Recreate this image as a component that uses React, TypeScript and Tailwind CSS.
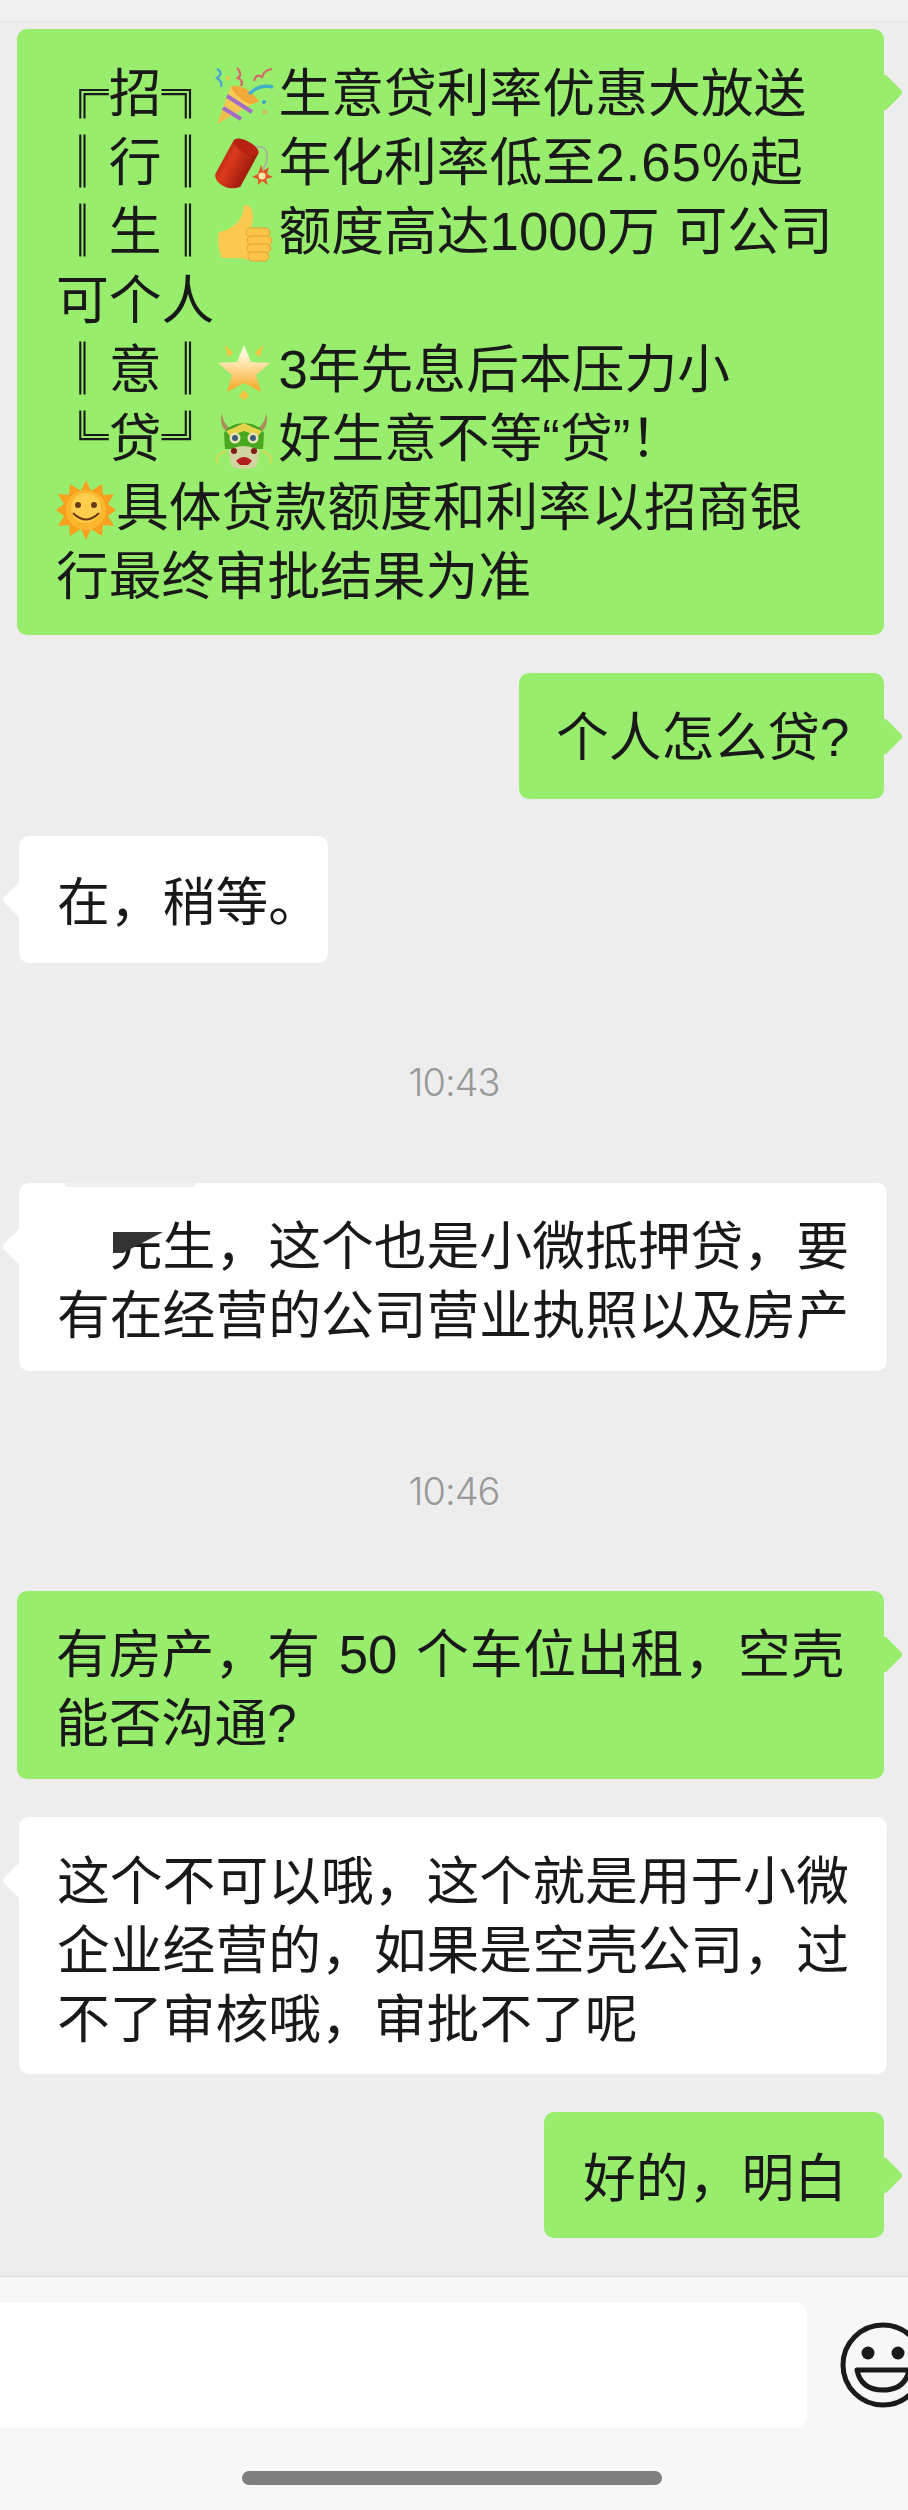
const green = 'bg-[#98ed6c]'

const lineCls = 'block h-[69px] leading-[69px] whitespace-nowrap'
const emojiCls = 'inline-block w-[60px] h-[60px] align-[-14px] mr-[4px]'
const boxCls = "font-['Noto_Sans_CJK_SC'] leading-none"

function Tail({ side }: { side: 'left' | 'right' }) {
  return (
    <span
      className={`absolute top-[49.5px] w-[27px] h-[27px] rotate-45 rounded-[4px] ${side === 'right' ? `-right-[13.5px] ${green}` : '-left-[12px] bg-white'}`}
    />
  )
}

function Popper() {
  return (
    <svg viewBox="0 0 60 60" className={emojiCls}>
      <defs>
        <linearGradient id="cone" x1="0" y1="1" x2="1" y2="0">
          <stop offset="0" stopColor="#e9b949" />
          <stop offset="1" stopColor="#ffd85e" />
        </linearGradient>
      </defs>
      <path d="M3 58 L17 20 Q30 22 42 36 Z" fill="url(#cone)" />
      <path d="M9 42 L27 53 M13 30 L38 46" stroke="#a56cc8" strokeWidth="4" fill="none" />
      <path d="M17 20 Q32 18 45 35 Q36 42 26 32 Q18 26 17 20 Z" fill="#f2a93a" />
      <path d="M35 28 Q45 18 59 21" stroke="#41b0c9" strokeWidth="3.5" fill="none" />
      <path d="M3 3 Q10 7 3 12 Q9 16 7 21" stroke="#4aa3d8" strokeWidth="2.2" fill="none" />
      <path d="M23 2 Q29 8 24 12 Q30 15 27 20" stroke="#d9686a" strokeWidth="2.4" fill="none" />
      <path d="M40 15 Q42 7 48 11 Q50 4 58 3" stroke="#d9686a" strokeWidth="2.2" fill="none" />
      <circle cx="14" cy="12" r="2" fill="#f0c43c" />
      <circle cx="50" cy="36" r="2" fill="#3a9fc4" />
      <circle cx="51" cy="46" r="2.5" fill="#cdbb66" />
    </svg>
  )
}

function Firecracker() {
  return (
    <svg viewBox="0 0 60 60" className={emojiCls}>
      <defs>
        <linearGradient id="red" x1="0" y1="0" x2="1" y2="0.6">
          <stop offset="0" stopColor="#8e1408" />
          <stop offset="0.45" stopColor="#dc3a1c" />
          <stop offset="1" stopColor="#8a1206" />
        </linearGradient>
      </defs>
      <path d="M19.7 5.3 L44.3 18.7 L26.3 51.7 Q14 56 5 48 Q0 43 1.7 38.3 Z" fill="url(#red)" />
      <ellipse cx="32" cy="12" rx="14" ry="6" transform="rotate(28 32 12)" fill="#b72213" />
      <path d="M42 12 Q52 10 53 20 Q54 30 46 37" stroke="#a9b59a" strokeWidth="2" fill="none" />
      <path d="M47 30 L49 36 L55 32 L53 39 L59 42 L52 44 L54 50 L48 46 L44 50 L44 44 L38 42 L44 39 Z" fill="#e2562b" />
      <circle cx="48" cy="41" r="3.5" fill="#ffe9a8" />
    </svg>
  )
}

function Thumb() {
  return (
    <svg viewBox="0 0 60 60" className={emojiCls}>
      <path d="M5 28 Q16 26 24 18 Q30 10 29 3 Q34 -2 38 6 Q41 16 36 26 L36 56 Q28 54 22 54 L8 54 Q2 42 5 28 Z" fill="#fbc94f" />
      <rect x="32" y="24" width="24" height="9" rx="4.5" fill="#fcc54a" stroke="#e7a031" strokeWidth="1" />
      <rect x="33" y="32" width="25" height="9" rx="4.5" fill="#fcc54a" stroke="#e7a031" strokeWidth="1" />
      <rect x="33" y="40" width="24" height="9" rx="4.5" fill="#fcc54a" stroke="#e7a031" strokeWidth="1" />
      <rect x="34" y="48" width="21" height="9" rx="4.5" fill="#fcc54a" stroke="#e7a031" strokeWidth="1" />
    </svg>
  )
}

function Star() {
  return (
    <svg viewBox="0 0 60 60" className={emojiCls}>
      <defs>
        <linearGradient id="star" x1="0" y1="0" x2="0" y2="1">
          <stop offset="0.2" stopColor="#fff8d8" />
          <stop offset="1" stopColor="#f9a51f" />
        </linearGradient>
      </defs>
      <path d="M30 3 L37 20 L56 21 L42 33 L47 50 L30 41 L13 50 L18 33 L4 21 L23 20 Z" fill="url(#star)" />
      <path d="M11 3 L19 11 L14 15 Z M49 3 L41 11 L46 15 Z M30 48 L35 54 L30 58 L25 54 Z" fill="#f8c23c" />
    </svg>
  )
}

function Dragon() {
  return (
    <svg viewBox="0 0 60 60" className={emojiCls}>
      <path d="M8 2 Q9 14 18 18 L14 22 Q4 14 8 2 Z M52 2 Q51 14 42 18 L46 22 Q56 14 52 2 Z" fill="#a88f5c" />
      <path d="M10 22 Q16 12 30 12 Q44 12 50 22 L49 38 L11 38 Z" fill="#47a81f" />
      <path d="M12 20 L22 16 L30 12 L38 16 L48 20 L44 25 L30 20 L16 25 Z" fill="#e4d34a" />
      <circle cx="21" cy="27" r="5.5" fill="#e9e5b8" />
      <circle cx="39" cy="27" r="5.5" fill="#e9e5b8" />
      <circle cx="21" cy="27" r="3" fill="#3f5b78" />
      <circle cx="39" cy="27" r="3" fill="#3f5b78" />
      <path d="M14 40 Q30 30 46 40 L42 56 Q30 60 18 56 Z" fill="#cfd4a0" />
      <circle cx="20" cy="40" r="3" fill="#7a1d17" />
      <circle cx="40" cy="40" r="3" fill="#7a1d17" />
      <path d="M22 50 Q30 42 38 50 L34 54 H26 Z" fill="#b21f1c" />
      <path d="M12 40 Q0 44 4 52 M48 40 Q60 44 56 52" stroke="#e4d34a" strokeWidth="1.5" fill="none" />
    </svg>
  )
}

function Sun() {
  return (
    <svg viewBox="0 0 60 60" className="inline-block w-[60px] h-[60px] align-[-14px]">
      <path d="M30 0 L35 11 L46 4 L47 15 L58 14 L52 24 L60 30 L52 36 L58 46 L47 45 L46 56 L35 49 L30 60 L25 49 L14 56 L13 45 L2 46 L8 36 L0 30 L8 24 L2 14 L13 15 L14 4 L25 11 Z" fill="#f9a01e" />
      <circle cx="30" cy="30" r="20" fill="#fcb62e" />
      <circle cx="30" cy="28" r="15" fill="#ffce4d" />
      <circle cx="22" cy="25" r="3" fill="#6b3a12" />
      <circle cx="38" cy="25" r="3" fill="#6b3a12" />
      <path d="M17 33 Q30 46 43 33" stroke="#6b3a12" strokeWidth="2" fill="none" />
    </svg>
  )
}

function Smiley() {
  return (
    <svg viewBox="0 0 90 90" className="w-[90px] h-[90px] shrink-0" fill="none" stroke="#1a1a1a" strokeWidth="5">
      <circle cx="45" cy="45" r="40" />
      <circle cx="30" cy="33" r="6.5" fill="#1a1a1a" stroke="none" />
      <circle cx="60" cy="33" r="6.5" fill="#1a1a1a" stroke="none" />
      <path d="M19 50 H71 Q67 70 45 70 Q23 70 19 50 Z" strokeLinejoin="round" />
    </svg>
  )
}

function Time({ children, cls }: { children: string; cls: string }) {
  return <p className={`text-center font-[Inter] text-[38px] leading-[46px] tracking-[-1px] font-light text-[#999999] ${cls}`}>{children}</p>
}

export default function App() {
  return (
    <div
      className="w-[908px] h-[2510px] overflow-hidden bg-[#ededed] text-[52.8px] text-[#191919]"
      style={{ fontFamily: '"Liberation Sans", "Noto Sans CJK SC", sans-serif' }}
    >
      <div className="h-[22px] bg-[#f0f0f0] border-b border-[#e2e2e2]" />

      <div className="h-[2254px] pt-[7px]">
        {/* 招行生意贷 */}
        <div className={`relative ml-[17px] w-[867px] h-[606px] pt-[30px] pl-[39px] rounded-[10px] ${green}`}>
          <Tail side="right" />
          <span className={lineCls}><span className={boxCls}>╔招╗</span><Popper />生意贷利率优惠大放送</span>
          <span className={lineCls}><span className={boxCls}>║行║</span><Firecracker />年化利率低至<span className="tracking-[1px]">2.65%</span>起</span>
          <span className={lineCls}><span className={boxCls}>║生║</span><Thumb />额度高达1000万 可公司</span>
          <span className={lineCls}>可个人</span>
          <span className={lineCls}><span className={boxCls}>║意║</span><Star />3年先息后本压力小</span>
          <span className={lineCls}><span className={boxCls}>╚贷╝</span><Dragon />好生意不等“贷”！</span>
          <span className={lineCls}><Sun />具体贷款额度和利率以招商银</span>
          <span className={lineCls}>行最终审批结果为准</span>
        </div>

        <div className="flex justify-end mt-[38px] mr-[24px]">
          <div className={`relative w-[365px] h-[126px] pt-[30px] pl-[37px] rounded-[10px] ${green}`}>
            <Tail side="right" />
            <span className={lineCls}>个人怎么贷?</span>
          </div>
        </div>

        <div className="flex justify-start mt-[37px] ml-[19px]">
          <div className="relative w-[309px] h-[127px] pt-[32px] pl-[38px] rounded-[10px] bg-white">
            <Tail side="left" />
            <span className={lineCls}>在，稍等。</span>
          </div>
        </div>

        <Time cls="mt-[96px]">10:43</Time>

        <div className="relative ml-[19px] w-[868px] h-[188px] mt-[78px] pt-[29px] pl-[38px] rounded-[10px] bg-white">
          <Tail side="left" />
          <span className={lineCls}>&#x3000;先生，这个也是小微抵押贷，要</span>
          <span className={lineCls}>有在经营的公司营业执照以及房产</span>
          {/* 打码遮挡 */}
          <span className="absolute left-[46px] top-0 w-[130px] h-[4px] bg-[#f1f1f1]" />
          <span className="absolute left-[92px] top-[30px] w-[56px] h-[19px] bg-white" />
          <svg viewBox="0 0 50 21" className="absolute left-[94px] top-[49px] w-[50px] h-[21px]">
            <path d="M0 0 H50 L10 21 H0 Z" fill="#333333" />
          </svg>
        </div>

        <Time cls="mt-[97px]">10:46</Time>

        <div className={`relative ml-[17px] w-[867px] h-[188px] mt-[77px] pt-[29px] pl-[39px] rounded-[10px] ${green}`}>
          <Tail side="right" />
          <span className={lineCls}>有房产，有<span className="mx-[4px]"> 50 </span><span className="tracking-[0.8px]">个车位出租，空壳</span></span>
          <span className={lineCls}>能否沟通?</span>
        </div>

        <div className="relative ml-[19px] w-[868px] h-[257px] mt-[38px] pt-[30px] pl-[38px] rounded-[10px] bg-white">
          <Tail side="left" />
          <span className={lineCls}>这个不可以哦，这个就是用于小微</span>
          <span className={lineCls}>企业经营的，如果是空壳公司，过</span>
          <span className={lineCls}>不了审核哦，审批不了呢</span>
        </div>

        <div className="flex justify-end mt-[38px] mr-[24px]">
          <div className={`relative w-[340px] h-[126px] pt-[32px] pl-[39px] rounded-[10px] ${green}`}>
            <Tail side="right" />
            <span className={lineCls}>好的，明白</span>
          </div>
        </div>
      </div>

      <footer className="h-[234px] bg-[#f7f7f7] border-t border-[#dcdcdc]">
        <div className="flex items-center gap-[31px] pt-[25px]">
          <div className="w-[807px] h-[126px] shrink-0 bg-white rounded-r-[12px]" />
          <Smiley />
        </div>
        <div className="mt-[43px] ml-[242px] w-[420px] h-[14px] rounded-full bg-[#7f7f7f]" />
      </footer>
    </div>
  )
}
